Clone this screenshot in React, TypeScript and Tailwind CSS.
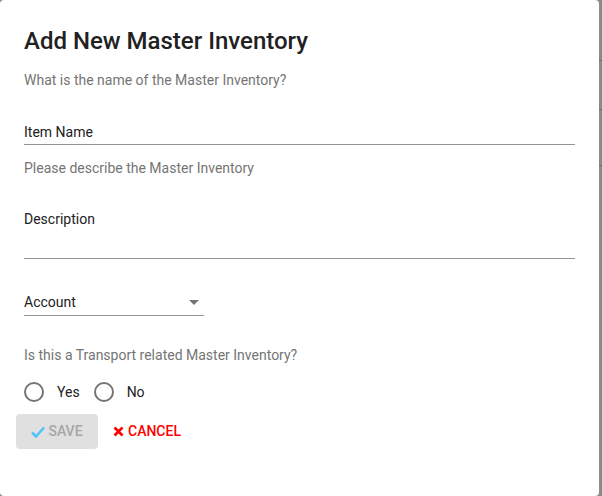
import React from "react";

function Radio({ label }: { label: string }) {
  return (
    <div className="flex items-center h-[24px]">
      <svg width="24" height="24" viewBox="0 0 24 24" className="shrink-0">
        <circle cx="12" cy="12" r="9" fill="none" stroke="#757575" strokeWidth="2" />
      </svg>
      <span className="ml-[11px] text-[14px] text-[#212121]">{label}</span>
    </div>
  );
}

export default function App() {
  return (
    <div
      className="w-[602px] h-[496px] flex bg-[#8a8a8a] overflow-hidden"
      style={{ fontFamily: "Roboto, 'Liberation Sans', sans-serif" }}
    >
      <div className="w-[599px] h-[496px] bg-white rounded-[4px] flex flex-col">
        <div className="px-[24px] pt-[25px]">
          <h2 className="text-[24px] leading-[32px] font-medium text-[#212121]">Add New Master Inventory</h2>
          <p className="mt-[11px] text-[14px] leading-[24px] text-[#757575]">What is the name of the Master Inventory?</p>
          <div className="mt-[28px] border-b border-[#949494] text-[14px] leading-[24px] text-[#212121]">Item Name</div>
          <p className="mt-[11px] text-[14px] leading-[24px] text-[#757575]">Please describe the Master Inventory</p>
          <div className="mt-[27px] border-b border-[#949494] pb-[27px] text-[14px] leading-[24px] text-[#212121]">Description</div>
          <div className="mt-[31px] w-[180px] border-b border-[#949494] flex items-center justify-between text-[14px] leading-[25px] text-[#212121]">
            <span>Account</span>
            <svg width="10" height="5" viewBox="0 0 10 5" className="mr-[5px]">
              <path d="M0 0 L10 0 L5 5 Z" fill="#757575" />
            </svg>
          </div>
          <p className="mt-[27px] text-[14px] leading-[24px] text-[#757575]">Is this a Transport related Master Inventory?</p>
          <div className="mt-[13px] flex items-center gap-[12px] ml-[-2px]">
            <Radio label="Yes" />
            <Radio label="No" />
          </div>
        </div>
        <div className="mt-[10px] ml-[16px] flex items-center gap-[15px]">
          <button className="h-[35px] w-[82px] rounded-[4px] bg-[#e0e0e0] flex items-center justify-center text-[14px] font-medium uppercase text-[#a6a6a6]">
            <svg width="14" height="12" viewBox="0 0 14 12" className="mr-[3px]">
              <path d="M1 6.5 L5 10.5 L13 1.5" fill="none" stroke="#4fc3f7" strokeWidth="2.6" strokeLinejoin="round" />
            </svg>
            Save
          </button>
          <button className="flex items-center text-[14px] font-medium uppercase text-[#ff0000]">
            <svg width="11" height="11" viewBox="0 0 11 11" className="mr-[4px]">
              <path d="M1.5 1.5 L9.5 9.5 M9.5 1.5 L1.5 9.5" stroke="#ff0000" strokeWidth="2.6" />
            </svg>
            Cancel
          </button>
        </div>
      </div>
      <div className="flex-1 flex flex-col">
        <div className="h-[60px]" />
        <div className="h-[1px] bg-[#6e6e6e]" />
        <div className="h-[48px]" />
        <div className="h-[1px] bg-[#6e6e6e]" />
        <div className="h-[55px]" />
        <div className="h-[1px] bg-[#6e6e6e]" />
      </div>
    </div>
  );
}
